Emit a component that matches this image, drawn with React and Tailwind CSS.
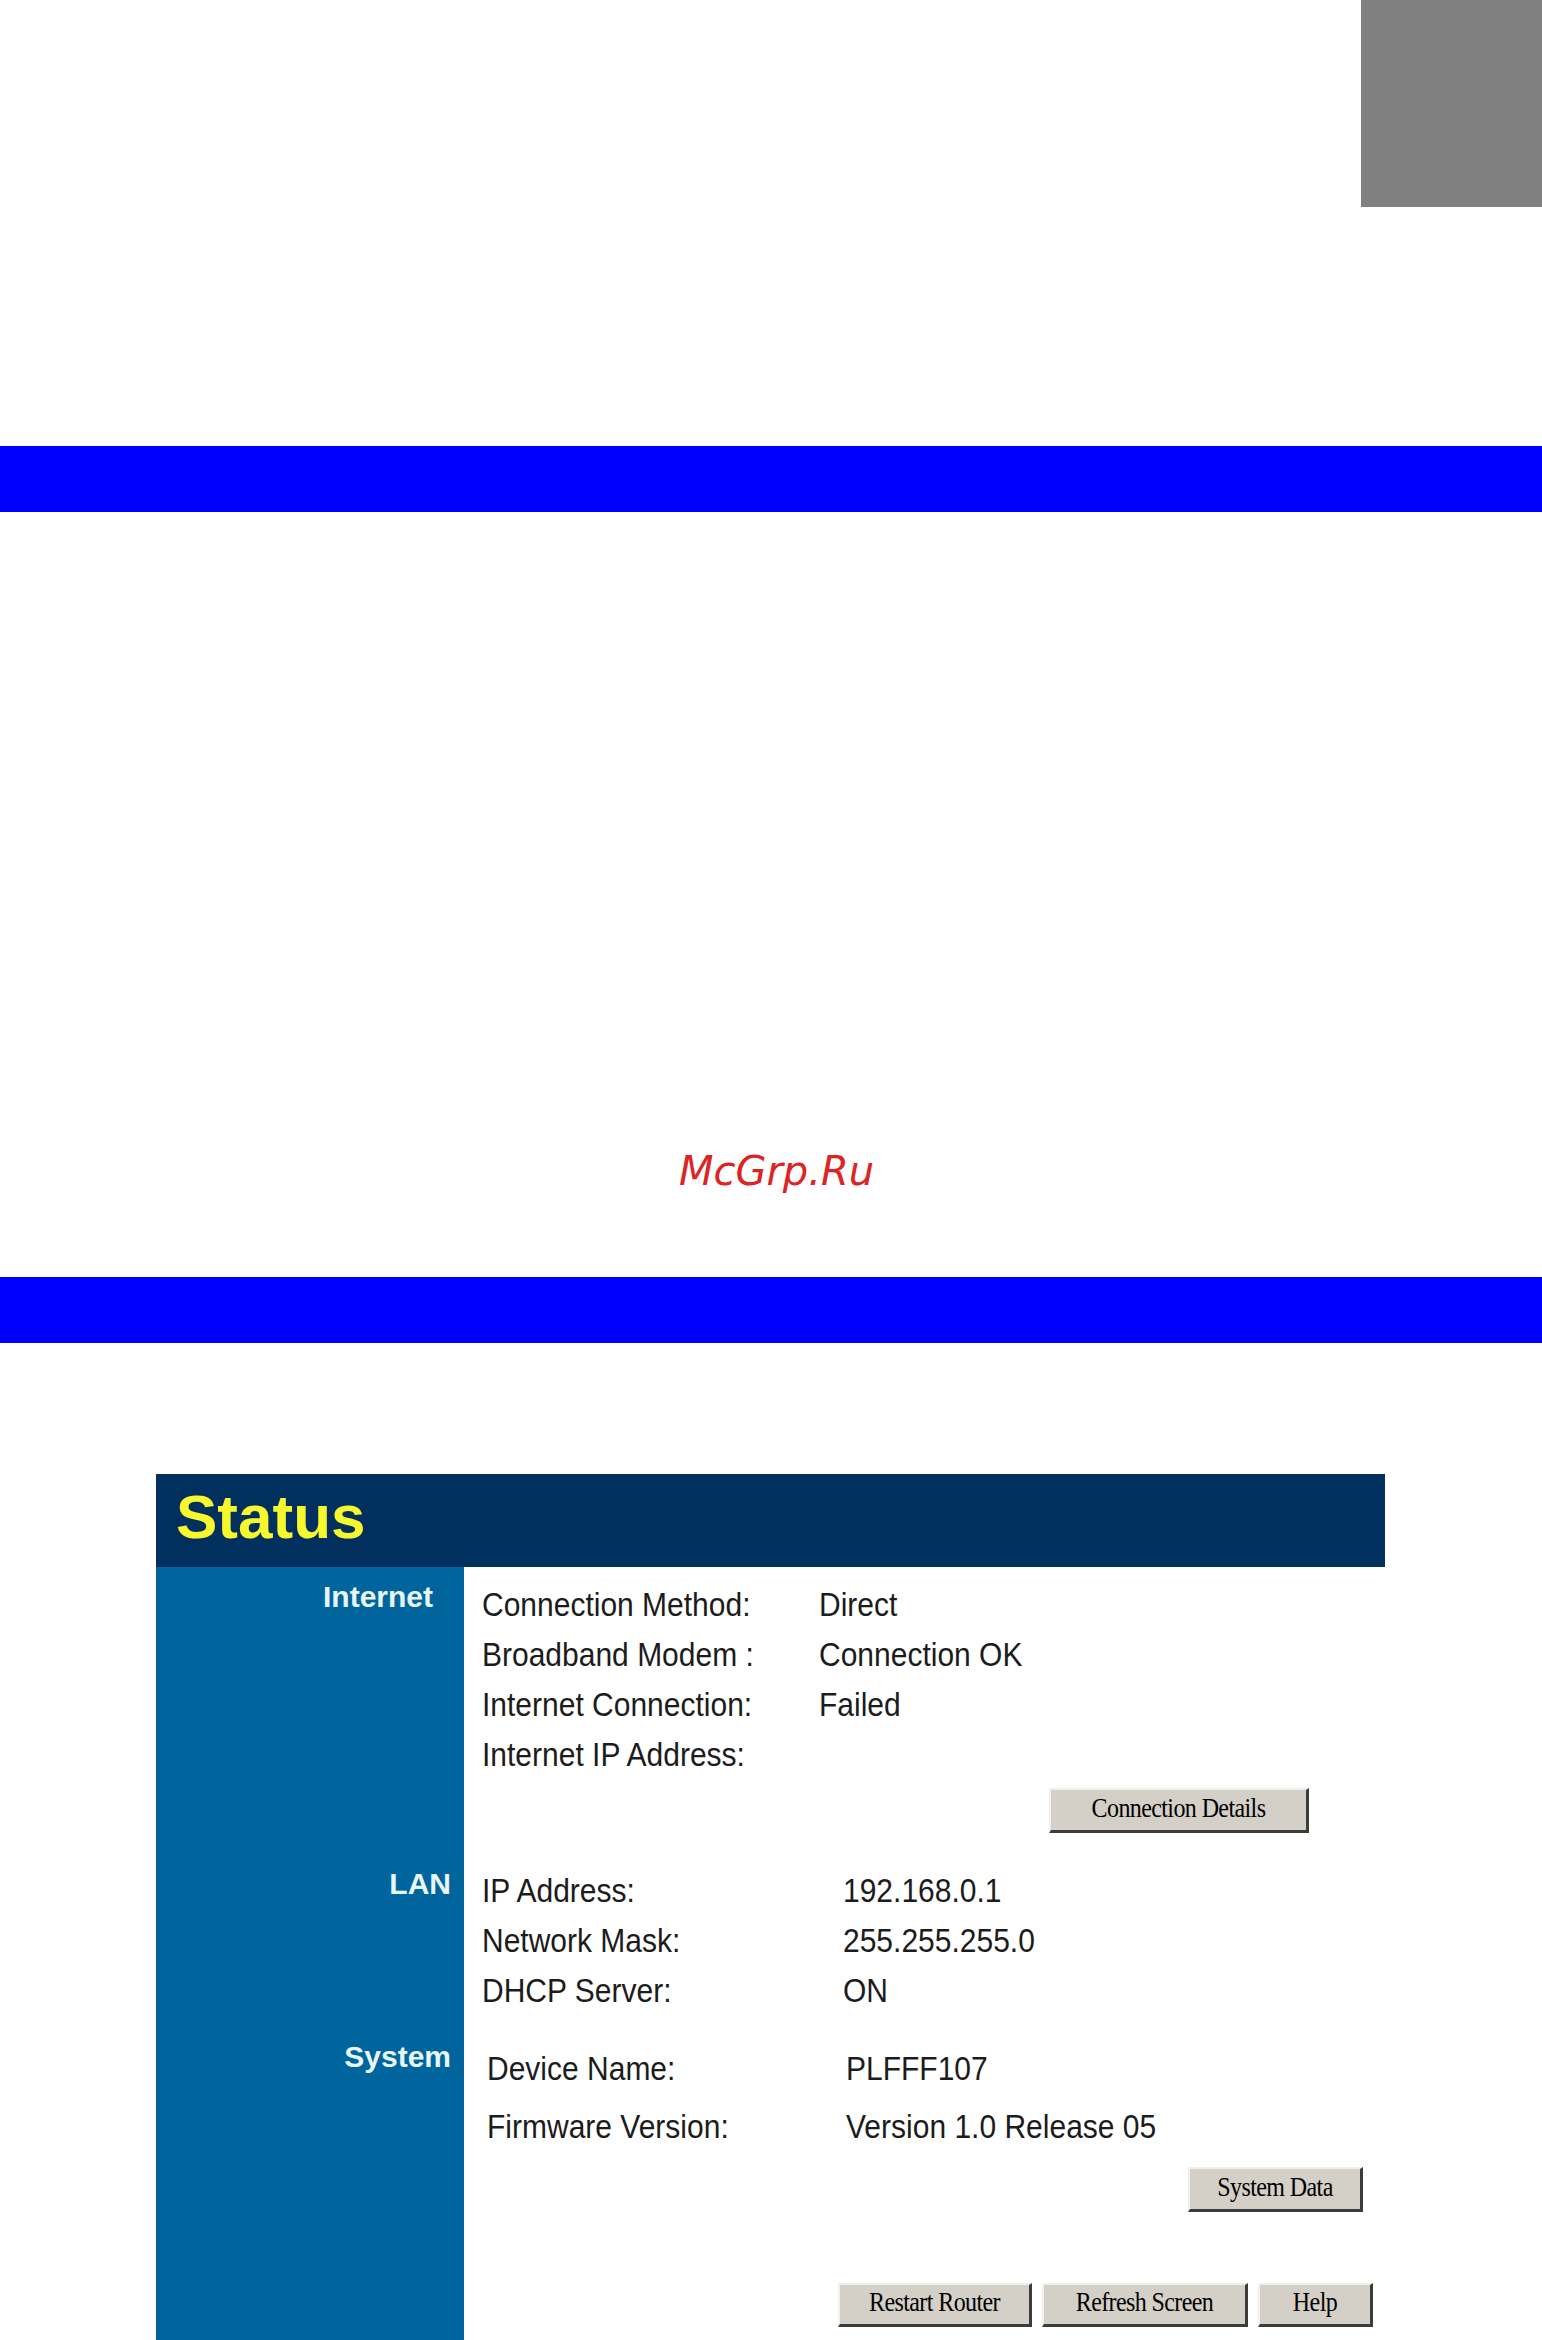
const WinButton = ({ children, className }) => (
  <button
    className={`flex items-center justify-center border-t-2 border-l-2 border-t-[#f2f0ea] border-l-[#f2f0ea] border-r-[3px] border-b-[3px] border-r-[#3c3c3c] border-b-[#3c3c3c] bg-[#d4d0c8] pb-[5px] font-['Liberation_Serif'] text-[24px] tracking-[-0.6px] text-black ${className}`}
  >
    <span className="inline-block scale-y-[1.15]">{children}</span>
  </button>
);

const Row = ({ label, value, labelW }) => (
  <div className="flex h-[50px] items-center leading-[50px]">
    <span className={`inline-block scale-y-[1.12] ${labelW}`}>{label}</span>
    <span className="inline-block scale-y-[1.12]">{value}</span>
  </div>
);

const SideLabel = ({ children, className }) => (
  <div className="w-[308px] shrink-0 bg-[#00649d]">
    <div
      className={`text-right text-[30px] font-bold leading-[50px] text-[#e8f6f6] ${className}`}
    >
      {children}
    </div>
  </div>
);

export default function App() {
  return (
    <div className="min-h-[2340px] w-[1542px] bg-white font-['Liberation_Sans',sans-serif]">
      <div className="flex h-[446px] items-start justify-end">
        <div className="h-[207px] w-[181px] bg-[#808080]" />
      </div>
      <div className="h-[66px] bg-[#0000ff]" />

      <div className="pt-[635px] pb-[82px] pl-[11px] text-center">
        <span className="font-['DejaVu_Sans',sans-serif] text-[40px] italic leading-[48px] text-[#dc2424]">
          McGrp.Ru
        </span>
      </div>
      <div className="h-[66px] bg-[#0000ff]" />

      {/* status page of the router */}
      <div className="ml-[156px] mt-[131px] w-[1229px]">
        <div className="flex h-[93px] items-center bg-[#01305f] pb-[8px] pl-[20px]">
          <span className="text-[62px] font-bold leading-none text-[#f7f72f]">
            Status
          </span>
        </div>

        <div className="flex">
          <SideLabel className="pt-[5px] pr-[31px]">Internet</SideLabel>
          <div className="flex-1 pl-[18px] pt-[13px] text-[30px] text-[#1c1c1c]">
            <Row label="Connection Method:" value="Direct" labelW="w-[337px]" />
            <Row label="Broadband Modem :" value="Connection OK" labelW="w-[337px]" />
            <Row label="Internet Connection:" value="Failed" labelW="w-[337px]" />
            <Row label="Internet IP Address:" value="" labelW="w-[337px]" />
            <div className="mt-[8px] flex justify-end pr-[76px]">
              <WinButton className="h-[45px] w-[260px]">Connection Details</WinButton>
            </div>
          </div>
        </div>

        <div className="flex">
          <SideLabel className="pt-[26px] pr-[13px]">LAN</SideLabel>
          <div className="flex-1 pl-[18px] pt-[33px] text-[30px] text-[#1c1c1c]">
            <Row label="IP Address:" value="192.168.0.1" labelW="w-[361px]" />
            <Row label="Network Mask:" value="255.255.255.0" labelW="w-[361px]" />
            <Row label="DHCP Server:" value="ON" labelW="w-[361px]" />
          </div>
        </div>

        <div className="flex">
          <SideLabel className="pt-[16px] pr-[13px]">System</SideLabel>
          <div className="flex-1 pl-[23px] pt-[28px] pb-[60px] text-[30px] text-[#1c1c1c]">
            <div className="flex flex-col gap-[8px]">
              <Row label="Device Name:" value="PLFFF107" labelW="w-[359px]" />
              <Row label="Firmware Version:" value="Version 1.0 Release 05" labelW="w-[359px]" />
            </div>
            <div className="mt-[15px] flex justify-end pr-[22px]">
              <WinButton className="h-[45px] w-[175px]">System Data</WinButton>
            </div>
            <div className="mt-[71px] flex justify-end gap-[10px] pr-[12px]">
              <WinButton className="h-[44px] w-[194px]">Restart Router</WinButton>
              <WinButton className="h-[44px] w-[206px]">Refresh Screen</WinButton>
              <WinButton className="h-[44px] w-[115px]">Help</WinButton>
            </div>
          </div>
        </div>
      </div>
    </div>
  );
}
